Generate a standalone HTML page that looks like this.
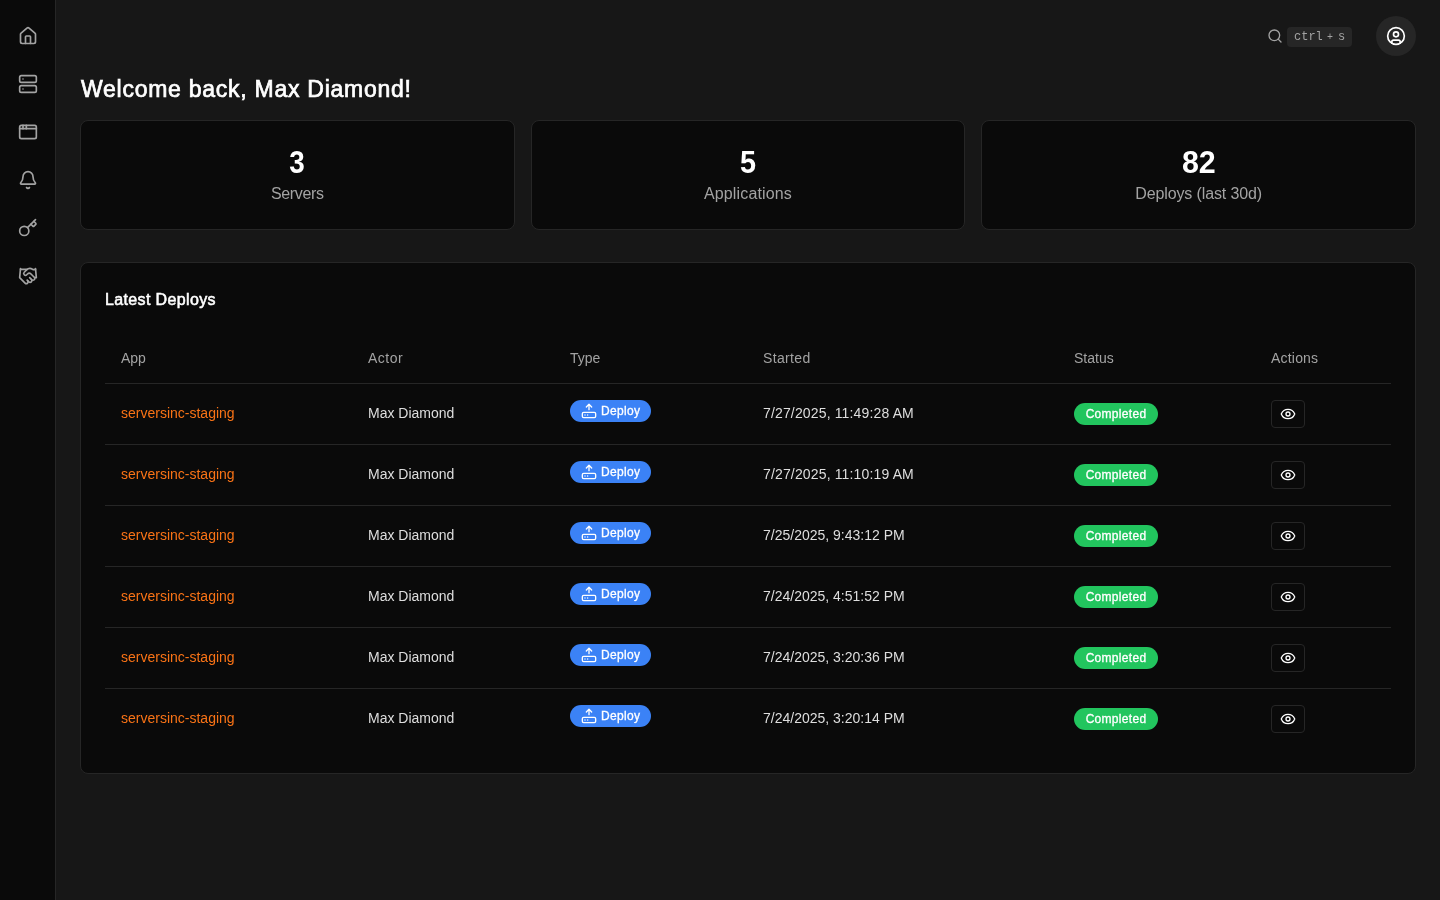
<!DOCTYPE html>
<html lang="en">
<head>
<meta charset="utf-8">
<title>Dashboard</title>
<style>
*{box-sizing:border-box;margin:0;padding:0}
html,body{width:1440px;height:900px;overflow:hidden;background:#171717;color:#fff;font-family:"Liberation Sans",sans-serif;}
body{position:relative}
#root{position:absolute;left:0;top:0;width:1440px;height:900px;will-change:transform}
svg{display:block;fill:none;stroke:currentColor;stroke-width:2;stroke-linecap:round;stroke-linejoin:round}
.side{position:absolute;left:0;top:0;width:56px;height:900px;background:#0a0a0a;border-right:1px solid #262626}
.side svg{position:absolute;left:18px;width:20px;height:20px;color:#a3a3a3}
.search{position:absolute;left:1267px;top:28px;width:16px;height:16px;color:#a3a3a3}
.kbd{position:absolute;left:1287px;top:27px;width:65px;height:20px;background:#262626;border-radius:4px;font-family:"Liberation Mono",monospace;font-size:12px;line-height:20px;color:#a3a3a3;white-space:nowrap}
.kbd span{position:absolute;top:0}
.avatar{position:absolute;left:1376px;top:16px;width:40px;height:40px;border-radius:50%;background:#262626}
.avatar svg{position:absolute;left:10px;top:10px;width:20px;height:20px;color:#fff}
h1{position:absolute;left:81px;top:73px;font-size:23px;line-height:32px;font-weight:400;letter-spacing:.74px;-webkit-text-stroke:.7px #fff;white-space:nowrap;color:#fff}
.card{position:absolute;background:#0a0a0a;border:1px solid #262626;border-radius:8px}
.stat{top:120px;height:110px;width:434.67px;text-align:center}
.stat .n{position:absolute;left:0;right:0;top:23px;font-size:32px;line-height:36px;font-weight:700;color:#fff}
.stat .n b{display:inline-block;font-weight:700;transform-origin:50% 50%}
.stat .l{position:absolute;left:0;right:0;top:61px;font-size:16px;line-height:24px;color:#a3a3a3}
.deploys{left:80px;top:262px;width:1336px;height:512px}
h2{position:absolute;left:24px;top:25px;font-size:16px;line-height:24px;font-weight:400;letter-spacing:.36px;-webkit-text-stroke:.55px #fff;color:#fff;white-space:nowrap}
table{position:absolute;left:24px;top:70px;width:1286px;border-collapse:separate;border-spacing:0;table-layout:fixed;font-size:14px;line-height:20px;font-weight:400;font-style:normal;text-align:left;white-space:nowrap}
th{height:51px;text-align:left;font-weight:400;font-size:14px;color:#a3a3a3;padding:0 16px;border-bottom:1px solid #262626;vertical-align:middle}
td{height:61px;padding:0 16px 2px;vertical-align:middle;color:#dedede;font-size:14px;white-space:nowrap;position:relative;border-bottom:1px solid #262626}
tbody tr:last-child td{height:60px;border-bottom:0}
td.app{color:#f97316}
td.dt{letter-spacing:.15px}
.bd{position:absolute;left:16px;top:16px;width:81px;height:22px;border-radius:11px;background:#3b82f6;color:#fff;font-size:12px;font-weight:400;letter-spacing:.35px;-webkit-text-stroke:.3px #fff;line-height:22px}
.bd svg{position:absolute;left:11px;top:3px;width:16px;height:16px}
.bd span{position:absolute;left:31px;top:0}
.bc{position:absolute;left:16px;top:19px;width:84px;height:22px;border-radius:11px;background:#22c55e;color:#fff;font-size:12px;font-weight:400;letter-spacing:.3px;-webkit-text-stroke:.3px #fff;line-height:22px;text-align:center}
.eye{position:absolute;left:16px;top:16px;width:34px;height:28px;border:1px solid #262626;border-radius:4px;color:#fff}
.eye svg{position:absolute;left:8px;top:5px;width:16px;height:16px}
</style>
</head>
<body>
<div id="root">
<div class="side">
<svg style="top:26px" viewBox="0 0 24 24"><path d="M15 21v-8a1 1 0 0 0-1-1h-4a1 1 0 0 0-1 1v8"/><path d="M3 10a2 2 0 0 1 .709-1.528l7-5.999a2 2 0 0 1 2.582 0l7 5.999A2 2 0 0 1 21 10v9a2 2 0 0 1-2 2H5a2 2 0 0 1-2-2z"/></svg>
<svg style="top:74px" viewBox="0 0 24 24"><rect width="20" height="8" x="2" y="2" rx="2" ry="2"/><rect width="20" height="8" x="2" y="14" rx="2" ry="2"/><line x1="6" x2="6.01" y1="6" y2="6"/><line x1="6" x2="6.01" y1="18" y2="18"/></svg>
<svg style="top:122px" viewBox="0 0 24 24"><rect x="2" y="4" width="20" height="16" rx="2"/><path d="M10 4v4"/><path d="M2 8h20"/><path d="M6 4v4"/></svg>
<svg style="top:170px" viewBox="0 0 24 24"><path d="M10.268 21a2 2 0 0 0 3.464 0"/><path d="M3.262 15.326A1 1 0 0 0 4 17h16a1 1 0 0 0 .74-1.673C19.41 13.956 18 12.499 18 8A6 6 0 0 0 6 8c0 4.499-1.411 5.956-2.738 7.326"/></svg>
<svg style="top:218px" viewBox="0 0 24 24"><path d="m15.5 7.500 2.300 2.300a1 1 0 0 0 1.400 0l2.100-2.100a1 1 0 0 0 0-1.400L19 4"/><path d="m21 2-9.600 9.600"/><circle cx="7.500" cy="15.500" r="5.500"/></svg>
<svg style="top:266px" viewBox="0 0 24 24"><path d="m11 17 2 2a1 1 0 1 0 3-3"/><path d="m14 14 2.500 2.500a1 1 0 1 0 3-3l-3.880-3.880a3 3 0 0 0-4.240 0l-.880.880a1 1 0 1 1-3-3l2.810-2.810a5.790 5.790 0 0 1 7.060-.870l.470.280a2 2 0 0 0 1.420.250L21 4"/><path d="m21 3 1 11h-2"/><path d="M3 3 2 14l6.500 6.500a1 1 0 1 0 3-3"/><path d="M3 4h8"/></svg>
</div>

<svg class="search" viewBox="0 0 24 24"><circle cx="11" cy="11" r="8"/><path d="m21 21-4.300-4.300"/></svg>
<div class="kbd"><span style="left:7px">ctrl</span><span style="left:40px;top:1px;font-size:10px">+</span><span style="left:51px">s</span></div>
<div class="avatar"><svg viewBox="0 0 24 24"><circle cx="12" cy="12" r="10"/><circle cx="12" cy="10" r="3"/><path d="M7 20.662V19a2 2 0 0 1 2-2h6a2 2 0 0 1 2 2v1.662"/></svg></div>

<h1>Welcome back, Max Diamond!</h1>

<div class="card stat" style="left:80px"><div class="n"><b style="transform:scaleX(.87)">3</b></div><div class="l" style="letter-spacing:-.35px">Servers</div></div>
<div class="card stat" style="left:530.67px"><div class="n"><b style="transform:scaleX(.9)">5</b></div><div class="l" style="letter-spacing:.15px">Applications</div></div>
<div class="card stat" style="left:981.33px"><div class="n"><b style="transform:scaleX(.95)">82</b></div><div class="l" style="letter-spacing:-.12px">Deploys (last 30d)</div></div>

<div class="card deploys">
<h2>Latest Deploys</h2>
<table>
<colgroup><col style="width:247px"><col style="width:202px"><col style="width:193px"><col style="width:311px"><col style="width:197px"><col style="width:136px"></colgroup>
<thead><tr><th>App</th><th style="letter-spacing:.5px">Actor</th><th>Type</th><th style="letter-spacing:.35px">Started</th><th>Status</th><th style="letter-spacing:.2px">Actions</th></tr></thead>
<tbody>
<tr><td class="app">serversinc-staging</td><td>Max Diamond</td><td><div class="bd"><svg viewBox="0 0 24 24"><path d="m16 6-4-4-4 4"/><path d="M12 2v8"/><rect width="20" height="8" x="2" y="14" rx="2"/><path d="M6 18h.01"/><path d="M10 18h.01"/></svg><span>Deploy</span></div></td><td class="dt">7/27/2025, 11:49:28 AM</td><td><div class="bc">Completed</div></td><td><div class="eye"><svg viewBox="0 0 24 24"><path d="M2.062 12.348a1 1 0 0 1 0-.696 10.750 10.750 0 0 1 19.876 0 1 1 0 0 1 0 .696 10.750 10.750 0 0 1-19.876 0"/><circle cx="12" cy="12" r="3"/></svg></div></td></tr>
<tr><td class="app">serversinc-staging</td><td>Max Diamond</td><td><div class="bd"><svg viewBox="0 0 24 24"><path d="m16 6-4-4-4 4"/><path d="M12 2v8"/><rect width="20" height="8" x="2" y="14" rx="2"/><path d="M6 18h.01"/><path d="M10 18h.01"/></svg><span>Deploy</span></div></td><td class="dt">7/27/2025, 11:10:19 AM</td><td><div class="bc">Completed</div></td><td><div class="eye"><svg viewBox="0 0 24 24"><path d="M2.062 12.348a1 1 0 0 1 0-.696 10.750 10.750 0 0 1 19.876 0 1 1 0 0 1 0 .696 10.750 10.750 0 0 1-19.876 0"/><circle cx="12" cy="12" r="3"/></svg></div></td></tr>
<tr><td class="app">serversinc-staging</td><td>Max Diamond</td><td><div class="bd"><svg viewBox="0 0 24 24"><path d="m16 6-4-4-4 4"/><path d="M12 2v8"/><rect width="20" height="8" x="2" y="14" rx="2"/><path d="M6 18h.01"/><path d="M10 18h.01"/></svg><span>Deploy</span></div></td><td class="dp">7/25/2025, 9:43:12 PM</td><td><div class="bc">Completed</div></td><td><div class="eye"><svg viewBox="0 0 24 24"><path d="M2.062 12.348a1 1 0 0 1 0-.696 10.750 10.750 0 0 1 19.876 0 1 1 0 0 1 0 .696 10.750 10.750 0 0 1-19.876 0"/><circle cx="12" cy="12" r="3"/></svg></div></td></tr>
<tr><td class="app">serversinc-staging</td><td>Max Diamond</td><td><div class="bd"><svg viewBox="0 0 24 24"><path d="m16 6-4-4-4 4"/><path d="M12 2v8"/><rect width="20" height="8" x="2" y="14" rx="2"/><path d="M6 18h.01"/><path d="M10 18h.01"/></svg><span>Deploy</span></div></td><td class="dp">7/24/2025, 4:51:52 PM</td><td><div class="bc">Completed</div></td><td><div class="eye"><svg viewBox="0 0 24 24"><path d="M2.062 12.348a1 1 0 0 1 0-.696 10.750 10.750 0 0 1 19.876 0 1 1 0 0 1 0 .696 10.750 10.750 0 0 1-19.876 0"/><circle cx="12" cy="12" r="3"/></svg></div></td></tr>
<tr><td class="app">serversinc-staging</td><td>Max Diamond</td><td><div class="bd"><svg viewBox="0 0 24 24"><path d="m16 6-4-4-4 4"/><path d="M12 2v8"/><rect width="20" height="8" x="2" y="14" rx="2"/><path d="M6 18h.01"/><path d="M10 18h.01"/></svg><span>Deploy</span></div></td><td class="dp">7/24/2025, 3:20:36 PM</td><td><div class="bc">Completed</div></td><td><div class="eye"><svg viewBox="0 0 24 24"><path d="M2.062 12.348a1 1 0 0 1 0-.696 10.750 10.750 0 0 1 19.876 0 1 1 0 0 1 0 .696 10.750 10.750 0 0 1-19.876 0"/><circle cx="12" cy="12" r="3"/></svg></div></td></tr>
<tr><td class="app">serversinc-staging</td><td>Max Diamond</td><td><div class="bd"><svg viewBox="0 0 24 24"><path d="m16 6-4-4-4 4"/><path d="M12 2v8"/><rect width="20" height="8" x="2" y="14" rx="2"/><path d="M6 18h.01"/><path d="M10 18h.01"/></svg><span>Deploy</span></div></td><td class="dp">7/24/2025, 3:20:14 PM</td><td><div class="bc">Completed</div></td><td><div class="eye"><svg viewBox="0 0 24 24"><path d="M2.062 12.348a1 1 0 0 1 0-.696 10.750 10.750 0 0 1 19.876 0 1 1 0 0 1 0 .696 10.750 10.750 0 0 1-19.876 0"/><circle cx="12" cy="12" r="3"/></svg></div></td></tr>
</tbody>
</table>
</div>
</div>
</body>
</html>
